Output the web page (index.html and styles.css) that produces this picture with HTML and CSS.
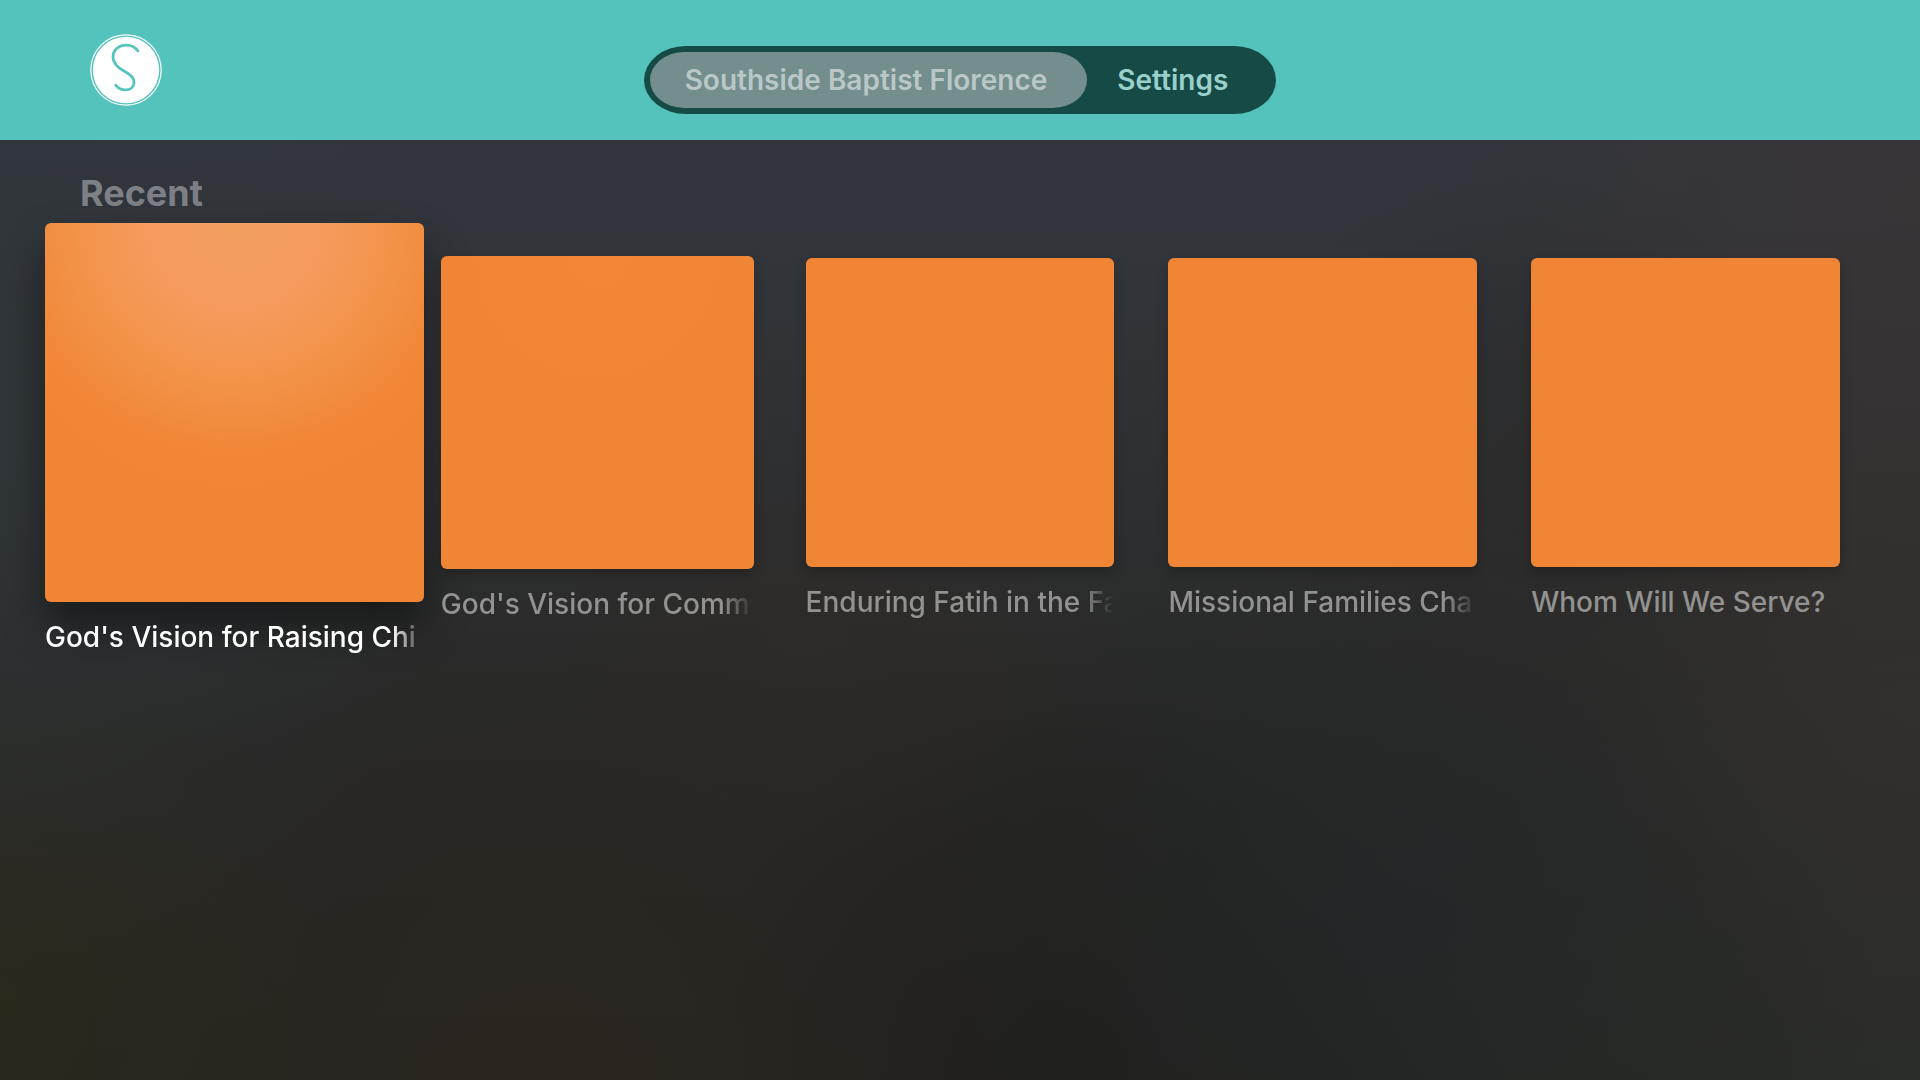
FILE: index.html
```html
<!DOCTYPE html>
<html lang="en">

<head>
  <meta charset="UTF-8">
  <meta name="viewport" content="width=device-width, initial-scale=1.0">
  <title>Southside Baptist Florence</title>
  <link rel="stylesheet" href="styles.css">
</head>

<body>
  <header class="header">
    <svg class="logo" viewBox="0 0 72 72" role="img" aria-label="Southside">
      <circle cx="36" cy="36" r="35.2" fill="none" stroke="#fff" stroke-width="1.2" />
      <circle cx="36" cy="36" r="33.2" fill="#fff" />
      <path d="M47.9 16.9C45.1 13.1 41.1 11.1 36.1 11.1C28.6 11.1 23 16.1 23 23.1C23 30.1 27.6 33.6 33.6 36.8C40.1 40.1 44 43.1 44 48.4C44 53.1 40.3 55.9 35.6 55.9C31.4 55.9 28.1 54.4 25.8 51.2" fill="none" stroke="#55c4bd" stroke-width="2.8" stroke-linecap="round" />
    </svg>
    <nav class="tabs">
      <button type="button" class="tab active">Southside Baptist Florence</button>
      <button type="button" class="tab">Settings</button>
    </nav>
  </header>

  <main class="content">
    <h2>Recent</h2>
    <div class="cards">
      <a href="#" class="card focused">
        <div class="art"></div>
        <div class="title">God's Vision for Raising Chi</div>
      </a>
      <a href="#" class="card next">
        <div class="art"></div>
        <div class="title">God's Vision for Comm</div>
      </a>
      <a href="#" class="card">
        <div class="art"></div>
        <div class="title">Enduring Fatih in the Fa</div>
      </a>
      <a href="#" class="card">
        <div class="art"></div>
        <div class="title">Missional Families Cha</div>
      </a>
      <a href="#" class="card">
        <div class="art"></div>
        <div class="title">Whom Will We Serve?</div>
      </a>
    </div>
  </main>
</body>

</html>
```
FILE: styles.css
```css
* {
  box-sizing: border-box;
}

body {
  margin: 0;
  min-height: 100vh;
  font-family: Inter, 'Liberation Sans', sans-serif;
  background-color: #272623;
  background-image:
    radial-gradient(ellipse 25% 45% at 100% 15%, rgba(62, 52, 50, 0.5), transparent),
    radial-gradient(ellipse 25% 50% at 0% 40%, rgba(48, 56, 60, 0.7), transparent),
    radial-gradient(ellipse 16% 30% at 80% 44%, rgba(38, 38, 38, 0.5), transparent),
    radial-gradient(ellipse 14% 18% at 42% 60%, rgba(50, 42, 38, 0.4), transparent),
    radial-gradient(ellipse 18% 35% at 0% 92%, rgba(44, 42, 26, 0.7), transparent),
    radial-gradient(ellipse 20% 35% at 28% 98%, rgba(48, 38, 30, 0.5), transparent),
    radial-gradient(ellipse 25% 40% at 73% 86%, rgba(33, 39, 40, 0.8), transparent),
    radial-gradient(ellipse 40% 50% at 100% 66%, rgba(54, 50, 47, 0.7), transparent),
    radial-gradient(ellipse 30% 40% at 100% 100%, rgba(38, 44, 40, 0.8), transparent),
    radial-gradient(ellipse 20% 35% at 56% 98%, rgba(30, 29, 27, 0.8), transparent),
    linear-gradient(#32353d 13%, #313439 25%, #2d2e2f 50%, #282826 68%, #272520);
}

.header {
  display: grid;
  grid-template-columns: 1fr auto 1fr;
  align-items: start;
  height: 140px;
  padding: 34px 90px 0;
  background-color: #54c3bc;
}

.logo {
  width: 72px;
  height: 72px;
}

.tabs {
  display: flex;
  margin-top: 12px;
  padding: 6px;
  border-radius: 42px / 34px;
  background-color: #154a46;
}

.tab {
  height: 56px;
  padding: 0 42px 0 30px;
  border: 0;
  border-radius: 34px / 28px;
  background: none;
  font-family: inherit;
  font-size: 28px;
  font-weight: 600;
  color: #99d0cb;
}

.tab.active {
  padding: 0 40px 0 35px;
  background-color: #738e8d;
  color: #b9c7c7;
}

.content {
  padding: 30px 80px;
}

h2 {
  margin: 0;
  font-size: 36px;
  font-weight: 700;
  line-height: 46px;
  color: #7c8086;
}

.cards {
  display: grid;
  grid-template-columns: repeat(5, minmax(0, 1fr));
  align-items: start;
  gap: 54px;
  margin-top: 42px;
}

.card {
  color: #929291;
  text-decoration: none;
}

.art {
  aspect-ratio: 1;
  border-radius: 6px;
  background-color: #f08635;
  box-shadow: 0 6px 12px rgba(0, 0, 0, 0.2);
}

.title {
  margin-top: 16px;
  overflow: hidden;
  font-size: 28px;
  font-weight: 500;
  line-height: 38px;
  white-space: nowrap;
  -webkit-mask-image: linear-gradient(to left, transparent, #000 32px);
  mask-image: linear-gradient(to left, transparent, #000 32px);
}

.card:last-child .title {
  -webkit-mask-image: none;
  mask-image: none;
}

/* focused card grows past its column */
.focused {
  margin: -35px -35px 0;
  color: #fff;
}

.focused .art {
  background-image: radial-gradient(circle at 50% 0, #f29f5e 0, #f59b5d 20%, #f2944c 36%, #f18838 52%, #f08635 65%);
  box-shadow: 0 24px 44px rgba(0, 0, 0, 0.45);
}

.next {
  margin: -2px -2px 0;
}

.next .art {
  background-image: radial-gradient(circle at 50% 0, #f18838 0, #f08635 45%);
}
```
